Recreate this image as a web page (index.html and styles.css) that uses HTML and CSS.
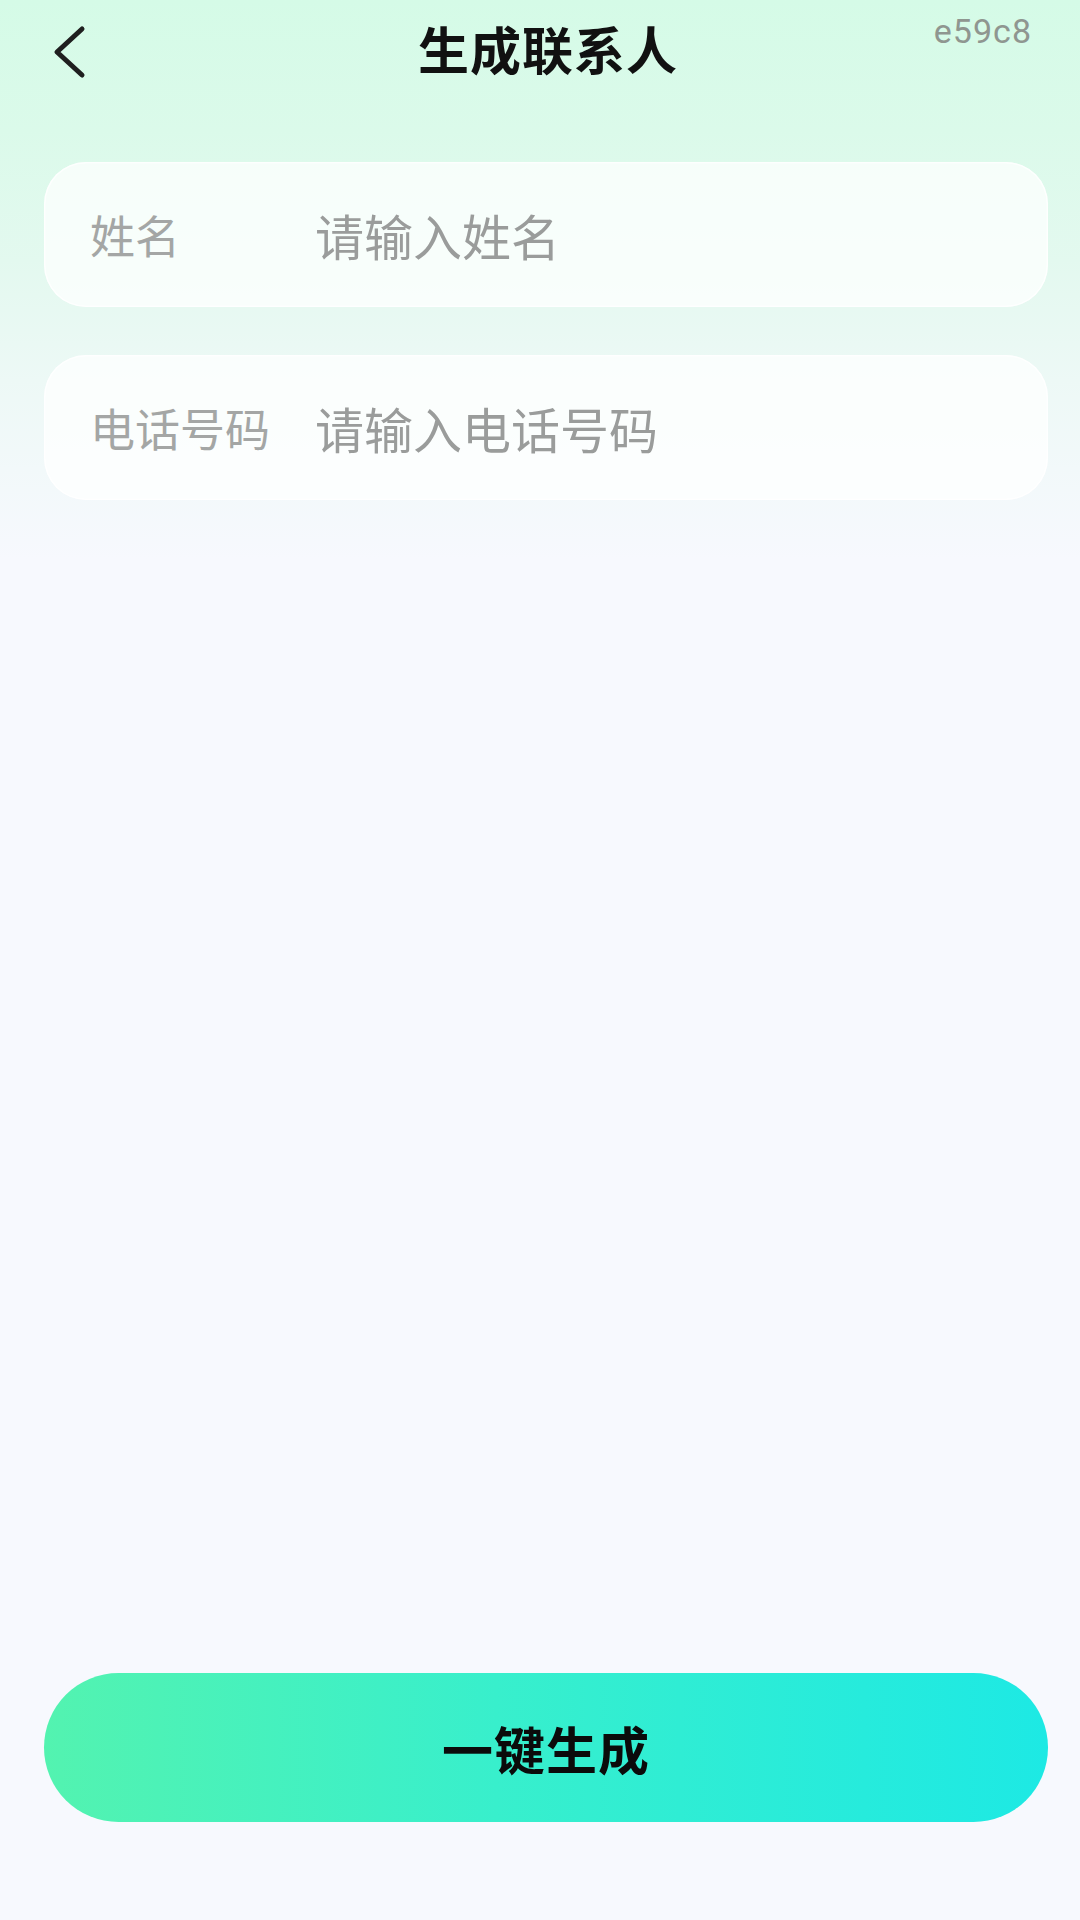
FILE: index.html
```html
<!DOCTYPE html>
<html lang="zh-CN">
<head>
<meta charset="utf-8">
<title>生成联系人</title>
<link rel="stylesheet" href="styles.css">
</head>
<body>
<div class="page">
  <header class="topbar">
    <button class="back" aria-label="返回">
      <svg width="40" height="56" viewBox="0 0 40 56">
        <polyline points="30,5 5,28 30,51" fill="none" stroke="#1f1f1f" stroke-width="5" stroke-linecap="round" stroke-linejoin="round"/>
      </svg>
    </button>
    <h1 class="title">生成联系人</h1>
    <span class="tag">e59c8</span>
  </header>

  <main class="form">
    <label class="field">
      <span class="label">姓名</span>
      <input class="input" type="text" placeholder="请输入姓名">
    </label>
    <label class="field">
      <span class="label">电话号码</span>
      <input class="input" type="tel" placeholder="请输入电话号码">
    </label>
  </main>

  <footer class="actions">
    <button class="primary">一键生成</button>
  </footer>
</div>
</body>
</html>
```

FILE: styles.css
```css
* {
  box-sizing: border-box;
}

html, body {
  margin: 0;
  padding: 0;
}

body {
  width: 1080px;
  height: 1920px;
  font-family: "Noto Sans CJK SC", "Noto Sans", Roboto, sans-serif;
  background: linear-gradient(180deg,
    #d5fbe7 0px,
    #dbfaea 130px,
    #e3f9ef 260px,
    #edf9f6 380px,
    #f7f9fe 560px,
    #f7f9fe 100%);
  overflow: hidden;
}

.page {
  height: 1920px;
  display: flex;
  flex-direction: column;
}

.topbar {
  display: grid;
  grid-template-columns: 1fr auto 1fr;
  align-items: center;
  height: 104px;
  padding: 0 48px 0 52px;
}

.back {
  justify-self: start;
  background: none;
  border: 0;
  padding: 0;
  display: flex;
  align-items: center;
  cursor: pointer;
}

.back svg {
  display: block;
}

.title {
  margin: 0 0 8px 0;
  font-size: 51px;
  font-weight: 700;
  color: #111111;
  letter-spacing: 1px;
  line-height: 1;
  padding-left: 12px;
}

.tag {
  justify-self: end;
  align-self: start;
  margin-top: 11px;
  font-family: Roboto, "Liberation Sans", sans-serif;
  font-size: 34px;
  letter-spacing: 1px;
  color: #8f9690;
  line-height: 1.2;
}

.form {
  display: flex;
  flex-direction: column;
  gap: 48px;
  padding: 58px 32px 0 44px;
}

.field {
  display: flex;
  align-items: center;
  height: 145px;
  padding: 0 46px;
  border-radius: 42px;
  background: rgba(255, 255, 255, 0.74);
  box-shadow: inset 0 0 0 1.5px rgba(255, 255, 255, 0.8);
}

.label {
  flex: 0 0 225px;
  font-size: 45px;
  color: #a4a6a5;
  line-height: 1;
}

.input {
  flex: 1;
  min-width: 0;
  border: 0;
  outline: none;
  background: transparent;
  font-family: "Noto Sans CJK SC", "Noto Sans", sans-serif;
  font-size: 49px;
  color: #333333;
  padding: 0;
}

.input::placeholder {
  color: #9a9c9b;
}

.actions {
  margin-top: auto;
  padding: 0 32px 98px 44px;
}

.primary {
  display: block;
  width: 100%;
  height: 149px;
  border: 0;
  border-radius: 75px;
  background: linear-gradient(90deg, #53f3b0 0%, #38efcc 45%, #1de9e4 100%);
  font-family: "Noto Sans CJK SC", "Noto Sans", sans-serif;
  font-size: 51px;
  font-weight: 700;
  color: #0b0b0b;
  letter-spacing: 1px;
  cursor: pointer;
}
```
